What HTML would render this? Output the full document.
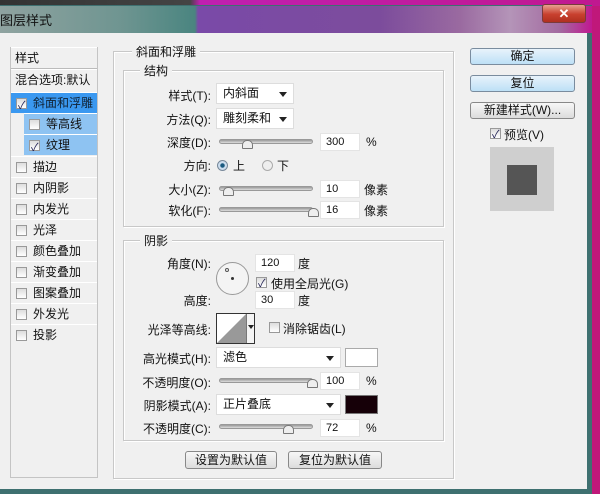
<!DOCTYPE html>
<html><head><meta charset="utf-8"><style>
*{margin:0;padding:0;box-sizing:border-box}
body{width:600px;height:494px;overflow:hidden;position:relative;background:#c0187a;font-family:"Liberation Sans","Noto Sans CJK SC",sans-serif;font-size:12px;color:#111}
.a{position:absolute}
.lbl{position:absolute;text-align:right;white-space:nowrap}
.inp{position:absolute;background:#fff;border:1px solid #e4e4e4;padding-left:5px;line-height:16px;height:18px;font-size:11px}
.dd{position:absolute;background:#fff;border:1px solid #ddd;padding-left:6px;line-height:19px;height:21px}
.dd:after{content:"";position:absolute;right:6px;top:8px;border:4px solid transparent;border-top:5px solid #222}
.sl{position:absolute;height:5px;border-radius:3px;background:linear-gradient(#999,#ddd);border:1px solid #999}
.th{position:absolute;width:11px;height:9px;background:#eee;border:1px solid #777;border-radius:5px 5px 1px 1px}
.cb{position:absolute;width:11px;height:11px;border:1px solid #999;background:linear-gradient(#ddd,#fff)}
.ck:after{content:"✓";position:absolute;left:1px;top:-3px;font-size:11px;color:#225}
.grp{position:absolute;border:1px solid #c8c8c8;box-shadow:inset 1px 1px #fff,1px 1px #fff}
.gt{position:absolute;background:#f0f0f0;padding:0 4px;top:-9px}
.li{position:absolute;left:11px;width:86px;height:21px;line-height:21px;padding-left:6px;border-top:1px solid #fff}
.li .cb{left:5px;top:5px}
.li span{margin-left:16px}
.btn{position:absolute;height:17px;border:1px solid #7a8c9e;border-radius:3px;text-align:center;line-height:15px;background:linear-gradient(#e8f3fb,#bde0f6)}
.btn2{position:absolute;height:18px;border:1px solid #888;border-radius:3px;text-align:center;line-height:16px;background:linear-gradient(#f7f7f7,#dcdcdc)}
</style></head><body>
<div class="a" style="left:0;top:0;width:600px;height:6px;background:linear-gradient(90deg,#333 0,#444 190px,#c020b0 200px,#c01890 100%)"></div>
<div class="a" style="left:0;top:5px;width:592px;height:489px;background:#3e7070"></div>
<div class="a" style="left:0;top:6px;width:592px;height:27px;background:linear-gradient(90deg,#8fa3a0 0,#6f9591 120px,#4a8580 195px,#7a4aa8 198px,#7c4c9c 380px,#9a6aa0 460px,#b494b8 510px,#a36aa0 560px,#c01890 592px)"></div>
<div class="a" style="left:0;top:10px;font-size:13px;color:#111">图层样式</div>
<div class="a" style="left:542px;top:4px;width:44px;height:19px;border:1px solid #7a3a3a;border-radius:3px;background:linear-gradient(#e8a090,#c8402e 55%,#b03020);color:#fff;text-align:center;font-size:13px;font-weight:bold;line-height:17px">✕</div>
<div class="a" style="left:0;top:33px;width:587px;height:456px;background:#f0f0f0"></div>

<!-- left list -->
<div class="a" style="left:10px;top:47px;width:88px;height:431px;border:1px solid #c4c4c4;background:#f0f0f0"></div>
<div class="li" style="top:47px;padding-left:4px">样式</div>
<div class="a" style="left:11px;top:68px;width:86px;height:1px;background:#bbb"></div>
<div class="li" style="top:69px;padding-left:4px">混合选项:默认</div>
<div class="li" style="top:92px;background:#3a98f0;color:#123"><div class="cb ck"></div><span>斜面和浮雕</span></div>
<div class="li" style="top:113px;left:24px;width:73px;background:#8ec3f2"><div class="cb"></div><span>等高线</span></div>
<div class="li" style="top:134px;left:24px;width:73px;background:#8ec3f2"><div class="cb ck"></div><span>纹理</span></div>
<div class="li" style="top:156px"><div class="cb"></div><span>描边</span></div>
<div class="li" style="top:177px"><div class="cb"></div><span>内阴影</span></div>
<div class="li" style="top:198px"><div class="cb"></div><span>内发光</span></div>
<div class="li" style="top:219px"><div class="cb"></div><span>光泽</span></div>
<div class="li" style="top:240px"><div class="cb"></div><span>颜色叠加</span></div>
<div class="li" style="top:261px"><div class="cb"></div><span>渐变叠加</span></div>
<div class="li" style="top:282px"><div class="cb"></div><span>图案叠加</span></div>
<div class="li" style="top:303px"><div class="cb"></div><span>外发光</span></div>
<div class="li" style="top:324px"><div class="cb"></div><span>投影</span></div>

<!-- main group -->
<div class="grp" style="left:113px;top:51px;width:341px;height:428px"><div class="gt" style="left:18px">斜面和浮雕</div></div>
<div class="grp" style="left:123px;top:70px;width:321px;height:157px"><div class="gt" style="left:16px">结构</div></div>
<div class="grp" style="left:123px;top:240px;width:321px;height:201px"><div class="gt" style="left:16px">阴影</div></div>

<div class="lbl" style="right:389px;top:87px">样式(T):</div>
<div class="dd" style="left:216px;top:83px;width:78px">内斜面</div>
<div class="lbl" style="right:389px;top:111px">方法(Q):</div>
<div class="dd" style="left:216px;top:108px;width:78px">雕刻柔和</div>
<div class="lbl" style="right:389px;top:134px">深度(D):</div>
<div class="sl" style="left:219px;top:139px;width:94px"></div><div class="th" style="left:242px;top:140px"></div>
<div class="inp" style="left:320px;top:133px;width:40px">300</div><div class="a" style="left:366px;top:135px">%</div>
<div class="lbl" style="right:389px;top:157px">方向:</div>
<div class="a" style="left:217px;top:160px;width:11px;height:11px;border-radius:50%;border:1px solid #789;background:radial-gradient(#1a5a80 30%,#cde 40%)"></div><div class="a" style="left:233px;top:157px">上</div>
<div class="a" style="left:262px;top:160px;width:11px;height:11px;border-radius:50%;border:1px solid #aaa;background:#eee"></div><div class="a" style="left:277px;top:157px">下</div>
<div class="lbl" style="right:389px;top:181px">大小(Z):</div>
<div class="sl" style="left:219px;top:186px;width:94px"></div><div class="th" style="left:223px;top:187px"></div>
<div class="inp" style="left:320px;top:180px;width:40px">10</div><div class="a" style="left:364px;top:181px">像素</div>
<div class="lbl" style="right:389px;top:202px">软化(F):</div>
<div class="sl" style="left:219px;top:207px;width:94px"></div><div class="th" style="left:308px;top:208px"></div>
<div class="inp" style="left:320px;top:201px;width:40px">16</div><div class="a" style="left:364px;top:202px">像素</div>

<div class="lbl" style="right:389px;top:255px">角度(N):</div>
<div class="a" style="left:216px;top:262px;width:33px;height:33px;border-radius:50%;border:1px solid #999;background:#f4f4f4"></div>
<div class="a" style="left:231px;top:277px;width:3px;height:3px;border-radius:50%;background:#333"></div>
<div class="a" style="left:225px;top:268px;width:4px;height:4px;border-radius:50%;border:1px solid #555"></div>
<div class="inp" style="left:255px;top:254px;width:40px">120</div><div class="a" style="left:298px;top:255px">度</div>
<div class="cb ck" style="left:256px;top:277px"></div><div class="a" style="left:271px;top:275px">使用全局光(G)</div>
<div class="lbl" style="right:389px;top:292px">高度:</div>
<div class="inp" style="left:255px;top:291px;width:40px">30</div><div class="a" style="left:298px;top:292px">度</div>
<div class="lbl" style="right:389px;top:321px">光泽等高线:</div>
<div class="a" style="left:216px;top:313px;width:39px;height:31px;border:1px solid #333;background:#fff;overflow:hidden"><svg width="30" height="29" style="position:absolute;left:0;top:0"><polygon points="0,29 29,0 29,29" fill="#999"/></svg><div class="a" style="left:29px;top:0;width:9px;height:29px;border-left:1px solid #777;background:#f4f4f4"></div><div class="a" style="left:31px;top:11px;border:3px solid transparent;border-top:4px solid #222"></div></div>
<div class="cb" style="left:269px;top:322px"></div><div class="a" style="left:283px;top:320px">消除锯齿(L)</div>
<div class="lbl" style="right:389px;top:350px">高光模式(H):</div>
<div class="dd" style="left:216px;top:347px;width:125px">滤色</div>
<div class="a" style="left:345px;top:348px;width:33px;height:19px;border:1px solid #aaa;background:#fff"></div>
<div class="lbl" style="right:389px;top:374px">不透明度(O):</div>
<div class="sl" style="left:219px;top:378px;width:94px"></div><div class="th" style="left:307px;top:379px"></div>
<div class="inp" style="left:320px;top:372px;width:40px">100</div><div class="a" style="left:366px;top:374px">%</div>
<div class="lbl" style="right:389px;top:397px">阴影模式(A):</div>
<div class="dd" style="left:216px;top:394px;width:125px">正片叠底</div>
<div class="a" style="left:345px;top:395px;width:33px;height:19px;border:1px solid #777;background:#160008"></div>
<div class="lbl" style="right:389px;top:420px">不透明度(C):</div>
<div class="sl" style="left:219px;top:424px;width:94px"></div><div class="th" style="left:283px;top:425px"></div>
<div class="inp" style="left:320px;top:419px;width:40px">72</div><div class="a" style="left:366px;top:421px">%</div>

<div class="btn2" style="left:185px;top:451px;width:92px">设置为默认值</div>
<div class="btn2" style="left:288px;top:451px;width:94px">复位为默认值</div>

<!-- right -->
<div class="btn" style="left:470px;top:48px;width:105px">确定</div>
<div class="btn" style="left:470px;top:75px;width:105px">复位</div>
<div class="btn2" style="left:470px;top:102px;width:105px;height:17px;line-height:15px">新建样式(W)...</div>
<div class="cb ck" style="left:490px;top:128px"></div><div class="a" style="left:504px;top:126px">预览(V)</div>
<div class="a" style="left:490px;top:147px;width:64px;height:64px;background:#cfcfcf"></div>
<div class="a" style="left:507px;top:165px;width:30px;height:30px;background:#555"></div>
</body></html>
